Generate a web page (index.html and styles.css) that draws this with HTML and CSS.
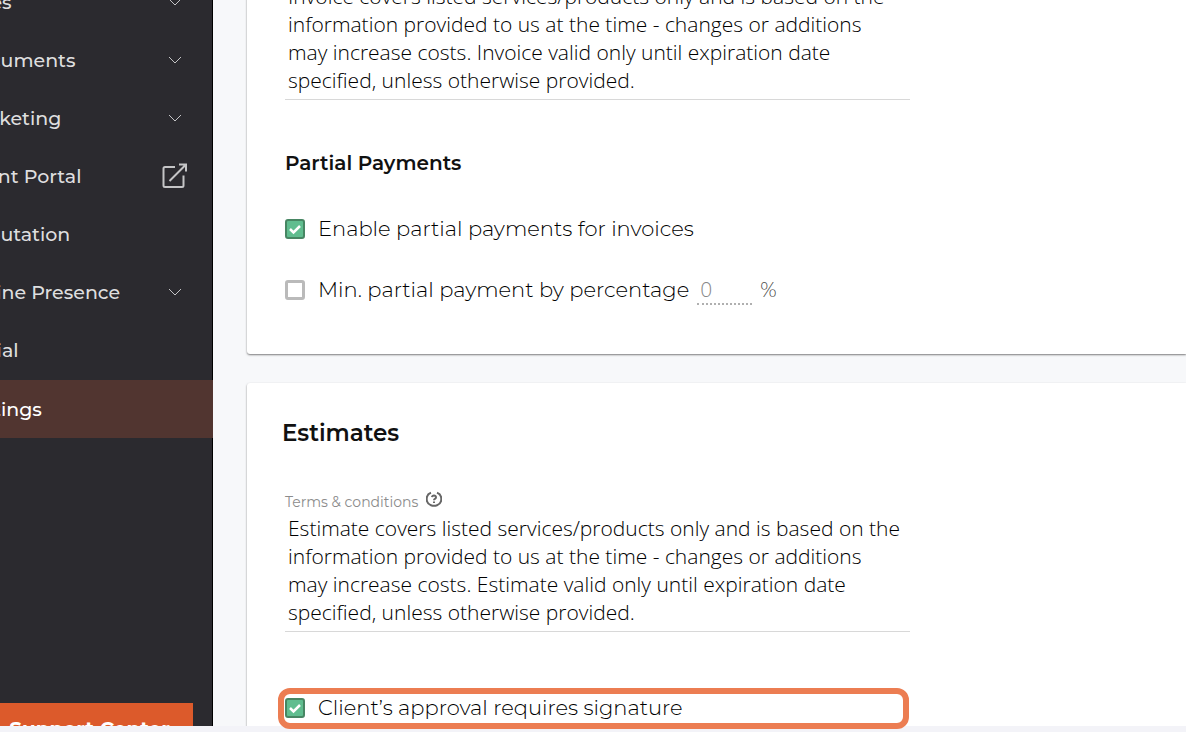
FILE: index.html
```
<!DOCTYPE html>
<html lang="en">
<head>
<meta charset="utf-8">
<title>Settings</title>
<link rel="stylesheet" href="styles.css">
</head>
<body>
<div class="app">
  <nav class="sidebar">
    <ul class="menu">
      <li><a href="#">Sales <svg class="chevron" viewBox="0 0 14 8"><path d="M1 1l6 6 6-6"/></svg></a></li>
      <li><a href="#">Documents <svg class="chevron" viewBox="0 0 14 8"><path d="M1 1l6 6 6-6"/></svg></a></li>
      <li><a href="#">Marketing <svg class="chevron" viewBox="0 0 14 8"><path d="M1 1l6 6 6-6"/></svg></a></li>
      <li><a href="#">Client Portal
        <svg class="external" viewBox="0 0 26 26"><path d="M13 4H3Q1.500 4 1.500 5.500V22.500Q1.500 24 3 24H20Q21.500 24 21.500 22.500V12.500M7.500 18L24 1.500M17 1.500H24V8.500"/></svg></a></li>
      <li><a href="#">Reputation</a></li>
      <li><a href="#">Online Presence <svg class="chevron" viewBox="0 0 14 8"><path d="M1 1l6 6 6-6"/></svg></a></li>
      <li><a href="#">Social</a></li>
      <li class="active"><a href="#">Settings</a></li>
    </ul>
    <button class="support" type="button">Support Center</button>
  </nav>

  <main class="content">
    <section class="card invoices">
      <textarea class="terms" rows="4" aria-label="Invoice terms">Invoice covers listed services/products only and is based on the information provided to us at the time - changes or additions may increase costs. Invoice valid only until expiration date specified, unless otherwise provided.</textarea>
      <h3>Partial Payments</h3>
      <div class="option">
        <input type="checkbox" id="partial" checked>
        <label for="partial">Enable partial payments for invoices</label>
      </div>
      <div class="option">
        <input type="checkbox" id="minimum">
        <label for="minimum">Min. partial payment by percentage</label>
        <input class="percent" type="text" placeholder="0" aria-label="Percentage">
        <span class="unit">%</span>
      </div>
    </section>

    <section class="card estimates">
      <h2>Estimates</h2>
      <div class="terms-label">
        <label for="estimateTerms">Terms &amp; conditions</label>
        <svg class="help" viewBox="0 0 16 16"><path d="M5 1.800A6.600 6.600 0 0 0 5 14.200M11 1.800A6.600 6.600 0 0 1 11 14.200M5 14.200Q8 15.400 11 14.200"/><path d="M6 6.200Q6.200 4.500 8 4.500T10 6.200Q10 7.300 8.900 7.900Q8 8.400 8 9.300M8 10.600V12"/></svg>
      </div>
      <textarea class="terms" id="estimateTerms" rows="4">Estimate covers listed services/products only and is based on the information provided to us at the time - changes or additions may increase costs. Estimate valid only until expiration date specified, unless otherwise provided.</textarea>
      <div class="option highlight">
        <input type="checkbox" id="signature" checked>
        <label for="signature">Client’s approval requires signature</label>
      </div>
    </section>
  </main>
</div>
<div class="bottom-bar"></div>
</body>
</html>
```
FILE: styles.css
```
* {
    box-sizing: border-box;
}
body {
    margin: 0;
    height: 100vh;
    overflow: hidden;
    background: #f7f8fa;
    font-family: Montserrat, Inter, sans-serif;
    color: #111;
}
.app {
    display: flex;
    height: 100vh;
    overflow: hidden;
}

/* sidebar */
.sidebar {
    flex: none;
    display: flex;
    flex-direction: column;
    width: 251px;
    margin-left: -38px;
    margin-top: -27px;
    background: #2b2a2f;
    border-right: 1px solid #000;
}
.menu {
    list-style: none;
    margin: 0;
    padding: 0;
}
.menu a {
    display: flex;
    align-items: center;
    justify-content: space-between;
    height: 58px;
    padding-right: 24px;
    color: #dededf;
    font-size: 19px;
    font-weight: 500;
    text-decoration: none;
}
.menu .active {
    margin-top: 1px;
    margin-right: -1px;
    background: #513530;
}
.menu .active a {
    color: #fff;
}
.menu svg {
    fill: none;
    stroke: #c4c4c6;
}
.chevron {
    width: 14px;
    height: 8px;
    margin-right: 6px;
}
.external {
    width: 26px;
    height: 26px;
    stroke-width: 2;
}
.support {
    flex: none;
    height: 52px;
    margin: 265px 19px 0 0;
    padding: 0 0 0 24px;
    border: 0;
    background: #dc5a2b;
    color: #fff;
    font: 700 20px Montserrat, Inter, sans-serif;
}

/* cards */
.content {
    flex: 1;
    min-width: 0;
    margin-top: -18px;
    padding-left: 34px;
}
.card {
    padding: 0 38px;
    border-radius: 3px 0 0 3px;
    background: #fff;
    box-shadow: 0 1px 2px rgba(0, 0, 0, 0.5);
}
.invoices {
    padding-bottom: 48px;
    margin-bottom: 29px;
}
.estimates {
    padding-top: 36px;
    padding-bottom: 60px;
}
h2, h3 {
    margin: 0;
    line-height: 28px;
}
h2 {
    margin-left: -3px;
    font-size: 23px;
    font-weight: 600;
}
h3 {
    margin: 49px 0 36px;
    font-size: 20px;
    font-weight: 600;
}
.terms {
    display: block;
    width: 100%;
    max-width: 625px;
    height: 118px;
    padding: 0 8px 0 3px;
    border: 0;
    border-bottom: 1px solid #d8d8d8;
    background: none;
    color: #000;
    font: 300 21px/28px "Open Sans", sans-serif;
    resize: none;
    overflow: hidden;
}
.terms-label {
    display: flex;
    align-items: center;
    gap: 8px;
    height: 26px;
    margin-top: 41px;
    color: #8c8c8c;
    font-size: 14px;
    font-weight: 400;
}
.terms-label label {
    padding-top: 2px;
}
.help {
    width: 16px;
    height: 16px;
    margin-bottom: 5px;
    fill: none;
    stroke: #666;
    stroke-width: 2;
}

/* options */
.option {
    display: flex;
    align-items: center;
    height: 32px;
    color: #000;
    font-size: 21px;
    font-weight: 300;
}
.option label {
    margin-bottom: 2px;
}
.option + .option {
    margin-top: 29px;
}
.option input[type="checkbox"] {
    appearance: none;
    width: 20px;
    height: 20px;
    margin: 0 13px 0 0;
    border: 3px solid #bababa;
    border-radius: 3px;
    background: #fff;
}
.option input[type="checkbox"]:checked {
    border: 2px solid #478663;
    background: #60bd8f url("data:image/svg+xml,%3Csvg xmlns='http://www.w3.org/2000/svg' viewBox='0 0 16 16'%3E%3Cpath d='M3 8l3.500 3.500L13 5' fill='none' stroke='white' stroke-width='2.500'/%3E%3C/svg%3E");
}
.percent {
    width: 55px;
    height: 30px;
    margin: 0 8px;
    padding: 0 3px;
    border: 0;
    border-bottom: 2px dotted #b0b0b0;
    background: none;
    font: 300 21px "Open Sans", sans-serif;
}
.percent::placeholder {
    color: #888;
}
.unit {
    color: #444;
    font-size: 20px;
}
.highlight {
    position: relative;
    max-width: 625px;
    margin-top: 60px;
}
.highlight::after {
    content: "";
    position: absolute;
    z-index: 2;
    inset: -4px 1px -5px -7px;
    border: 6px solid #ec7d52;
    border-radius: 12px;
    pointer-events: none;
}
.bottom-bar {
    position: fixed;
    z-index: 1;
    right: 0;
    bottom: 0;
    left: 0;
    height: 6px;
    background: #f3f3f8;
}
```
